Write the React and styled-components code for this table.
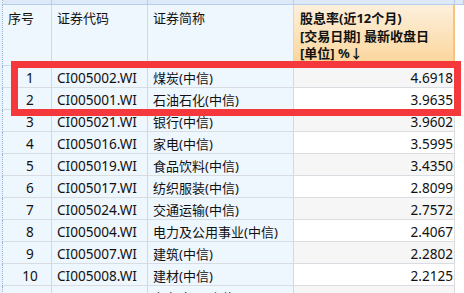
import styled, { createGlobalStyle } from 'styled-components';

const GlobalStyle = createGlobalStyle`
  html, body {
    margin: 0;
    padding: 0;
    background: #ffffff;
    overflow: hidden;
  }
  body {
    font-family: "Noto Sans", "Noto Sans CJK SC", sans-serif;
    font-size: 13px;
    color: #111;
  }
`;

const Sheet = styled.div`
  position: relative;
  width: 464px;
  height: 293px;
  overflow: hidden;
  background: #ffffff;
`;

const COLS = '3px 49px 96px 146px 161px 1fr';

const Row = styled.div`
  display: grid;
  grid-template-columns: ${COLS};
  height: ${p => p.h}px;
`;

const Gutter = styled.div`
  background: #e9f1fb;
  border-right: 1px dotted #9cb6d6;
`;

const Cell = styled.div`
  box-sizing: border-box;
  display: flex;
  align-items: center;
  justify-content: ${p => p.align === 'right' ? 'flex-end' : p.align === 'center' ? 'center' : 'flex-start'};
  padding: ${p => p.align === 'right' ? '2px 1px 0 5px' : p.align === 'center' ? '2px 4px 0 10px' : '2px 4px 0 5px'};
  font-size: ${p => p.latin ? '13.6px' : '13px'};
  white-space: nowrap;
  overflow: hidden;
  border-bottom: 1px solid #d9dde2;
  border-right: 1px solid ${p => p.frozen ? '#c9dbef' : '#dcdcdc'};
  background: ${p => p.frozen ? '#eef6fe' : p.odd ? '#f6f6f6' : '#ffffff'};
`;

const Filler = styled.div`
  background: #ffffff;
`;

const TopCell = styled.div`
  background: #dde9f8;
  border-bottom: 1px solid #b7cde9;
  border-right: 1px solid #b7cde9;
`;

const HeadCell = styled.div`
  box-sizing: border-box;
  padding: 5px 5px 0 5px;
  line-height: 17.5px;
  white-space: nowrap;
  overflow: hidden;
  border-bottom: 1px solid #c9dbef;
  border-right: 1px solid #c9dbef;
  background: #eef6fe;
`;

const SortHead = styled(HeadCell)`
  font-weight: bold;
  background: linear-gradient(#fdf0dc, #fbd59a);
  border-right: 2px solid #f7c47f;
  border-bottom: 1px solid #f7c47f;
  padding-left: 6px;
`;

const Highlight = styled.div`
  position: absolute;
  left: 11px;
  top: 61px;
  width: 450px;
  height: 55px;
  box-sizing: border-box;
  border: 7px solid #f4383b;
  pointer-events: none;
`;

const rows = [
  ['1', 'CI005002.WI', '煤炭(中信)', '4.6918'],
  ['2', 'CI005001.WI', '石油石化(中信)', '3.9635'],
  ['3', 'CI005021.WI', '银行(中信)', '3.9602'],
  ['4', 'CI005016.WI', '家电(中信)', '3.5995'],
  ['5', 'CI005019.WI', '食品饮料(中信)', '3.4350'],
  ['6', 'CI005017.WI', '纺织服装(中信)', '2.8099'],
  ['7', 'CI005024.WI', '交通运输(中信)', '2.7572'],
  ['8', 'CI005004.WI', '电力及公用事业(中信)', '2.4067'],
  ['9', 'CI005007.WI', '建筑(中信)', '2.2802'],
  ['10', 'CI005008.WI', '建材(中信)', '2.2125'],
  ['11', 'CI005003.WI', '有色金属(中信)', '2.0531'],
];

function App() {
  return (
    <Sheet>
      <GlobalStyle />
      <Row h={5}>
        <Gutter />
        <TopCell />
        <TopCell />
        <TopCell />
        <TopCell />
        <TopCell />
      </Row>
      <Row h={61}>
        <Gutter />
        <HeadCell>序号</HeadCell>
        <HeadCell>证券代码</HeadCell>
        <HeadCell>证券简称</HeadCell>
        <SortHead>
          股息率(近12个月)<br />
          [交易日期] 最新收盘日<br />
          [单位] %↓
        </SortHead>
        <Filler />
      </Row>
      {rows.map((r, i) => (
        <Row h={22} key={r[0]}>
          <Gutter />
          <Cell frozen latin align="center">{r[0]}</Cell>
          <Cell frozen latin>{r[1]}</Cell>
          <Cell frozen>{r[2]}</Cell>
          <Cell latin align="right" odd={i % 2 === 0}>{r[3]}</Cell>
          <Filler />
        </Row>
      ))}
      <Highlight />
    </Sheet>
  );
}

export default App;
